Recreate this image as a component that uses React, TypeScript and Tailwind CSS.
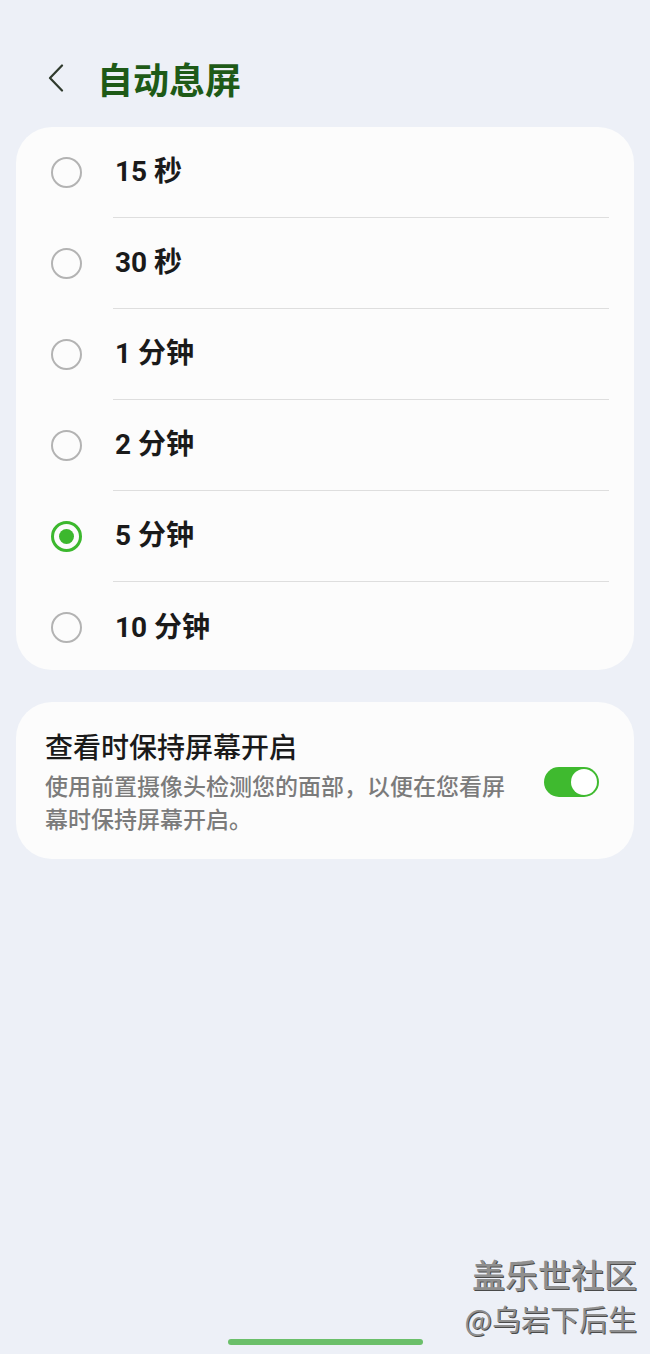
import React from "react";

const options = ["15 秒", "30 秒", "1 分钟", "2 分钟", "5 分钟", "10 分钟"];
const selected = 4;

function Radio({ on }: { on: boolean }) {
  if (on) {
    return (
      <div className="w-[31px] h-[31px] rounded-full border-[3px] border-[#3cb82e] flex items-center justify-center shrink-0">
        <div className="w-[15px] h-[15px] rounded-full bg-[#3cb82e]" />
      </div>
    );
  }
  return <div className="w-[31px] h-[31px] rounded-full border-2 border-[#b3b3b3] shrink-0" />;
}

export default function App() {
  return (
    <div
      className="relative min-h-[1354px] w-[650px] bg-[#edf0f7] flex flex-col"
      style={{ fontFamily: 'Roboto, "Noto Sans CJK SC", sans-serif' }}
    >
      {/* Header */}
      <div className="mt-[52px] h-[52px] flex items-center">
        <div className="ml-[44px] w-[24px] h-[30px] flex items-center justify-center">
          <svg width="20" height="28" viewBox="0 0 20 28" fill="none">
            <path d="M16 1.5 L4 14 L16 26.5" stroke="#2f3a2d" strokeWidth="2.2" strokeLinecap="round" strokeLinejoin="round" />
          </svg>
        </div>
        <div className="ml-[29px] text-[36px] font-bold text-[#1e5a17] leading-none" style={{ fontFamily: '"Noto Sans CJK SC", sans-serif' }}>
          自动息屏
        </div>
      </div>

      {/* Options card */}
      <div className="mt-[23px] mx-4 bg-[#fcfcfc] rounded-[36px] flex flex-col">
        {options.map((o, i) => (
          <div key={o} className="flex flex-col">
            {i > 0 && <div className="ml-[97px] mr-[25px] h-px bg-[#dedede]" />}
            <div className={`flex items-center ${i === options.length - 1 ? "h-[88px] pt-[3px]" : "h-[90px]"}`}>
              <div className="ml-[35px]">
                <Radio on={i === selected} />
              </div>
              <div className="ml-[33px] text-[28px] font-bold text-[#1a1a1a] leading-none">
                {o}
              </div>
            </div>
          </div>
        ))}
      </div>

      {/* Toggle card */}
      <div className="mt-[32px] mx-4 bg-[#fcfcfc] rounded-[36px] flex items-center pt-[26px] pb-[24px] pl-[29px] pr-[35px]" style={{ fontFamily: '"Noto Sans CJK SC", sans-serif' }}>
        <div className="w-[470px] flex flex-col">
          <div className="text-[28px] font-medium text-[#1a1a1a] leading-[36px]">查看时保持屏幕开启</div>
          <div className="mt-[5px] text-[23px] font-medium text-[#7b7b7b] leading-[33px]">
            使用前置摄像头检测您的面部，以便在您看屏幕时保持屏幕开启。
          </div>
        </div>
        <div className="ml-auto w-[55px] h-[30px] rounded-full bg-[#3fba2f] flex items-center justify-end pr-[2px]">
          <div className="w-[26px] h-[26px] rounded-full bg-white" />
        </div>
      </div>

      {/* Watermark */}
      <div className="absolute right-[13px] bottom-[18px] flex flex-col items-end" style={{ fontFamily: '"Noto Sans CJK SC", sans-serif' }}>
        <div className="text-[33px] font-medium text-[#8f8f8f] leading-[40px]" style={{ textShadow: "1px 1px 0 #4a4a4a" }}>盖乐世社区</div>
        <div className="mt-[6px] text-[29px] font-normal text-[#8f8f8f] leading-[36px]" style={{ textShadow: "1px 1px 0 #4a4a4a" }}>@乌岩下后生</div>
      </div>

      {/* Home bar */}
      <div className="absolute left-[228px] bottom-[9px] w-[195px] h-[6px] rounded-full bg-[#6bbf6a]" />
    </div>
  );
}
